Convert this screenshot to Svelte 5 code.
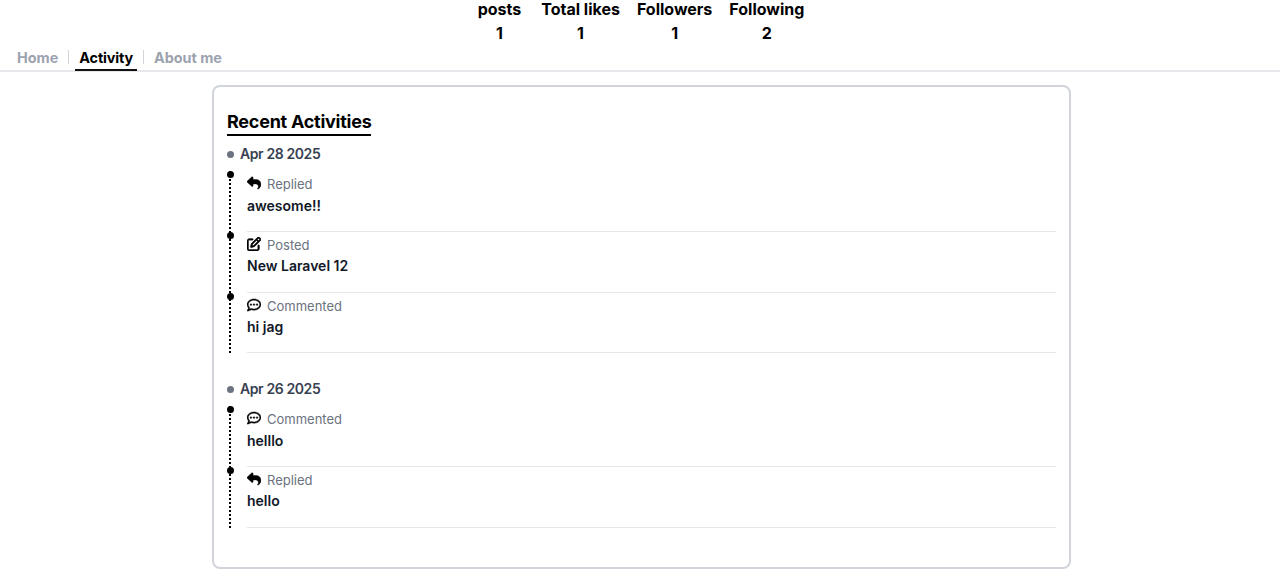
<script>
	const days = [
		{
			date: 'Apr 28 2025',
			items: [
				{ kind: 'reply', label: 'Replied', text: 'awesome!!' },
				{ kind: 'post', label: 'Posted', text: 'New Laravel 12' },
				{ kind: 'comment', label: 'Commented', text: 'hi jag' }
			]
		},
		{
			date: 'Apr 26 2025',
			items: [
				{ kind: 'comment', label: 'Commented', text: 'helllo' },
				{ kind: 'reply', label: 'Replied', text: 'hello' }
			]
		}
	];
	const stats = [
		{ label: 'posts', value: 1 },
		{ label: 'Total likes', value: 1 },
		{ label: 'Followers', value: 1 },
		{ label: 'Following', value: 2 }
	];
	const icons = {
		reply: 'M205 34.8c11.5 5.1 19 16.6 19 29.2v64H336c97.2 0 176 78.8 176 176c0 113.3-81.5 163.9-100.2 174.1c-2.5 1.4-5.3 1.9-8.1 1.9c-10.9 0-19.7-8.9-19.7-19.7c0-7.5 4.3-14.4 9.8-19.5c9.4-8.8 22.2-26.4 22.2-56.7c0-53-43-96-96-96H224v64c0 12.6-7.4 24.1-19 29.2s-25 3-34.4-5.4l-160-144C3.9 225.7 0 217.1 0 208s3.9-17.7 10.6-23.8l160-144c9.4-8.5 22.9-10.6 34.4-5.4z',
		post: 'M441 58.9L453.1 71c9.4 9.4 9.4 24.6 0 33.9L424 134.1 377.9 88 407 58.9c9.4-9.4 24.6-9.4 33.9 0zM209.8 256.2L344 121.9 390.1 168 255.8 302.2c-2.9 2.9-6.5 5-10.4 6.1l-58.5 16.7 16.7-58.5c1.1-3.9 3.2-7.5 6.1-10.4zM373.1 25L175.8 222.2c-8.7 8.7-15 19.4-18.3 31.1l-28.6 100c-2.4 8.4-.1 17.4 6.1 23.6s15.2 8.5 23.6 6.1l100-28.6c11.8-3.4 22.5-9.7 31.1-18.3L487 138.9c28.1-28.1 28.1-73.7 0-101.8L474.9 25C446.8-3.1 401.2-3.1 373.1 25zM88 64C39.4 64 0 103.4 0 152V424c0 48.6 39.4 88 88 88H360c48.6 0 88-39.4 88-88V312c0-13.3-10.7-24-24-24s-24 10.7-24 24V424c0 22.1-17.9 40-40 40H88c-22.1 0-40-17.9-40-40V152c0-22.1 17.9-40 40-40H200c13.3 0 24-10.7 24-24s-10.7-24-24-24H88z',
		comment: 'M168.2 384.9c-15-5.4-31.7-3.1-44.6 6.4c-8.2 6-22.3 14.8-39.4 22.7c5.6-14.7 9.9-31.3 11.3-49.4c1-12.9-3.3-25.7-11.8-35.5C60.4 302.8 48 272 48 240c0-79.5 83.3-160 208-160s208 80.5 208 160s-83.3 160-208 160c-31.6 0-61.3-5.5-87.8-15.1zM26.3 423.8c-1.6 2.7-3.3 5.4-5.1 8.1l-.3 .5c-1.6 2.3-3.2 4.6-4.8 6.9c-3.5 4.7-7.3 9.3-11.3 13.6c-4.6 4.6-5.9 11.4-3.4 17.4c2.5 6 8.3 9.9 14.8 9.9c5.1 0 10.2-.3 15.3-.8l.7-.1c4.4-.5 8.8-1.1 13.2-1.9c.8-.1 1.6-.3 2.4-.5c17.8-3.5 34.9-9.5 50.1-16.1c22.9-10 42.4-21.9 54.3-30.6c31.8 11.5 67 17.9 104.1 17.9c141.4 0 256-93.1 256-208S397.4 32 256 32S0 125.1 0 240c0 45.1 17.7 86.8 47.7 120.9c-1.9 24.5-11.4 46.3-21.4 62.9zM144 272a32 32 0 1 0 0-64 32 32 0 1 0 0 64zm144-32a32 32 0 1 0 -64 0 32 32 0 1 0 64 0zm80 32a32 32 0 1 0 0-64 32 32 0 1 0 0 64z'
	};
</script>

<div class="page">
	<div class="stats">
		{#each stats as s}
			<div class="stat">
				<div class="stat-label">{s.label}</div>
				<div class="stat-value">{s.value}</div>
			</div>
		{/each}
	</div>

	<nav class="tabs">
		<a class="tab">Home</a>
		<span class="sep"></span>
		<a class="tab active">Activity</a>
		<span class="sep"></span>
		<a class="tab">About me</a>
	</nav>

	<section class="card">
		<h2 class="title">Recent Activities</h2>
		{#each days as day}
			<div class="day">
				<div class="date"><span class="date-dot"></span>{day.date}</div>
				<ul class="timeline">
					{#each day.items as item}
						<li class="item">
							<span class="node"></span>
							<div class="kind">
								<svg class="icon {item.kind}" viewBox="0 0 512 512" aria-hidden="true"><path d={icons[item.kind]} /></svg>
								{item.label}
							</div>
							<div class="text">{item.text}</div>
						</li>
					{/each}
				</ul>
			</div>
		{/each}
	</section>
</div>

<style>
	:global(body) {
		margin: 0;
		background: #fff;
	}

	.page {
		font-family: Inter, 'Liberation Sans', sans-serif;
		height: 578px;
		overflow: hidden;
	}

	.stats {
		display: flex;
		justify-content: center;
		gap: 17px;
		height: 42px;
		padding-left: 2px;
	}

	.stat {
		text-align: center;
		font-size: 16px;
		font-weight: 700;
		color: #000;
	}

	.stat:first-child {
		margin-right: 3px;
	}

	.stat-label {
		line-height: 18px;
		margin-bottom: 6px;
	}

	.stat-value {
		line-height: 18px;
	}

	.tabs {
		display: flex;
		align-items: flex-end;
		height: 26px;
		margin-top: 2px;
		padding-left: 13px;
		border-bottom: 2px solid #e5e7eb;
	}

	.tab {
		font-size: 14.4px;
		font-weight: 700;
		color: #9ca3af;
		padding: 0 4px;
		line-height: 24px;
		height: 23px;
		margin-bottom: -1px;
		border-bottom: 2px solid transparent;
	}

	.tab.active {
		color: #000;
		letter-spacing: -0.15px;
		border-bottom-color: #111;
	}

	.sep {
		align-self: center;
		width: 1px;
		height: 14px;
		background: #d1d5db;
		margin: 0 6px;
	}

	.card {
		margin: 13px 209px 0 212px;
		height: 484px;
		border: 2px solid #d1d5db;
		border-radius: 8px;
		padding: 23px 13px 0 13px;
		box-sizing: border-box;
	}

	.title {
		display: inline-block;
		margin: 0;
		font-size: 18px;
		font-weight: 700;
		letter-spacing: -0.25px;
		line-height: 24px;
		color: #000;
		border-bottom: 2px solid #000;
	}

	.day {
		margin-bottom: 25.75px;
	}

	.date {
		display: flex;
		align-items: center;
		gap: 6px;
		margin-top: 8px;
		font-size: 14px;
		font-weight: 600;
		letter-spacing: -0.4px;
		line-height: 20px;
		color: #374151;
	}

	.date-dot {
		width: 7px;
		height: 7px;
		border-radius: 50%;
		background: #6b7280;
	}

	.timeline {
		list-style: none;
		margin: 7px 0 0 2px;
		padding: 0;
		border-left: 2px dotted #000;
	}

	.item {
		position: relative;
		margin-left: 16px;
		padding-top: 4px;
		height: 55.75px;
		border-bottom: 1px solid #e5e7eb;
	}

	.node {
		position: absolute;
		left: -20px;
		top: 0;
		width: 7px;
		height: 7px;
		border-radius: 50%;
		background: #000;
	}

	.kind {
		display: flex;
		align-items: center;
		gap: 6px;
		font-size: 13px;
		line-height: 18px;
		color: #6b7280;
	}

	.icon {
		width: 14px;
		height: 14px;
		fill: #000;
		stroke: #000;
		stroke-width: 14;
		flex: none;
		margin-top: -2px;
	}

	.icon.post {
		stroke-width: 26;
	}

	.text {
		margin-top: 2.5px;
		font-size: 14px;
		font-weight: 600;
		line-height: 20px;
		color: #111827;
	}
</style>
